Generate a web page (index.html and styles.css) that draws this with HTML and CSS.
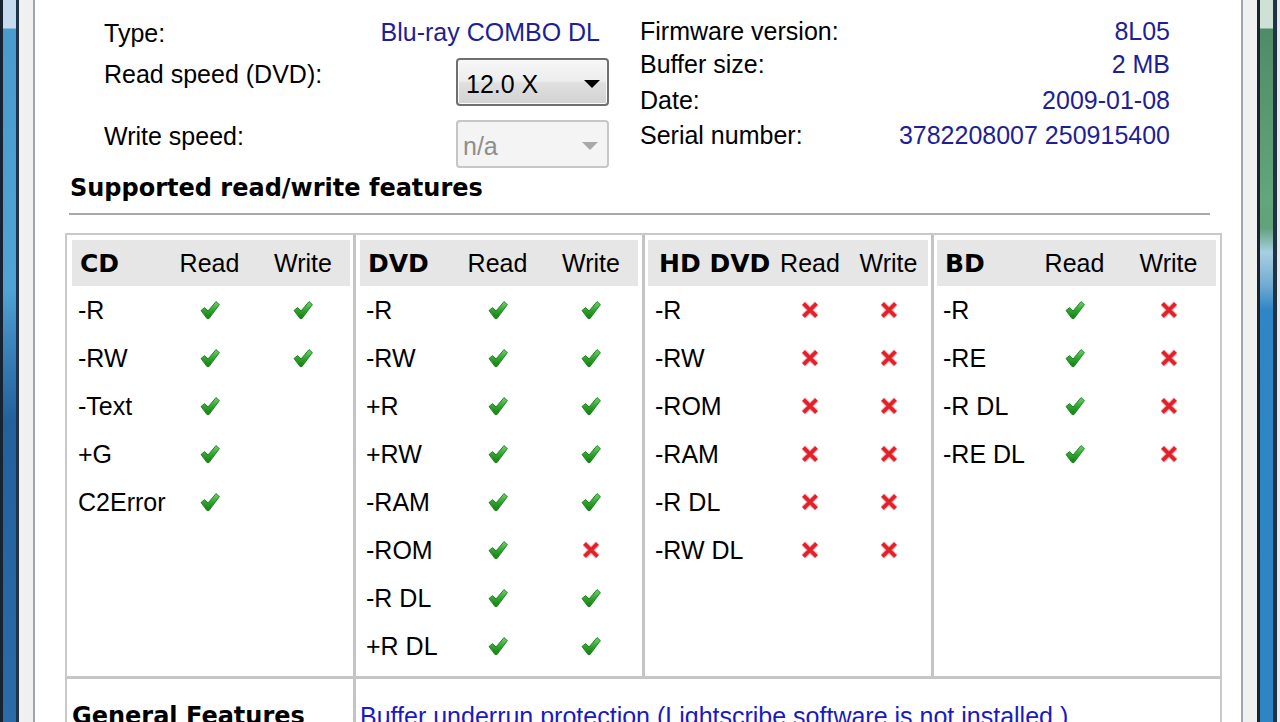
FILE: index.html
```html
<!DOCTYPE html>
<html lang="en">
<head>
<meta charset="utf-8">
<title>Drive information</title>
<link rel="stylesheet" href="styles.css">
</head>
<body>
<svg class="defs" aria-hidden="true">
  <defs>
    <linearGradient id="gchk" x1="0" y1="0" x2="0" y2="1">
      <stop offset="0" stop-color="#6fd66f"/>
      <stop offset="0.5" stop-color="#2fa52f"/>
      <stop offset="1" stop-color="#137f13"/>
    </linearGradient>
    <symbol id="ok" viewBox="0 0 20 20">
      <polygon points="1,10.5 4.6,7.6 8,11 16,1.6 19.4,4.6 9,18.6 7,18.6" fill="url(#gchk)" stroke="#1a7a1a" stroke-width="0.9" stroke-linejoin="round"/>
    </symbol>
    <symbol id="no" viewBox="0 0 20 20">
      <path d="M3.5 3.5 L16.5 16.5 M16.5 3.5 L3.5 16.5" stroke="#f5a3a6" stroke-width="5.4" fill="none"/>
      <path d="M3.5 3.5 L16.5 16.5 M16.5 3.5 L3.5 16.5" stroke="#e2202a" stroke-width="3.6" fill="none"/>
    </symbol>
  </defs>
</svg>
<div class="window">
  <div class="frame frame-l"></div>
  <div class="chrome chrome-l"></div>
  <main class="content">
    <section class="info">
      <div class="info-left">
        <div class="lbl">Type:</div>
        <div class="val type-val"><span>Blu-ray COMBO DL</span></div>
        <div class="lbl">Read speed (DVD):</div>
        <div class="combo"><span>12.0 X</span><i class="arrow"></i></div>
        <div class="lbl">Write speed:</div>
        <div class="combo disabled"><span>n/a</span><i class="arrow"></i></div>
      </div>
      <div class="info-right">
        <div class="lbl">Firmware version:</div><div class="val">8L05</div>
        <div class="lbl">Buffer size:</div><div class="val">2 MB</div>
        <div class="lbl">Date:</div><div class="val">2009-01-08</div>
        <div class="lbl">Serial number:</div><div class="val">3782208007 250915400</div>
      </div>
    </section>

    <h2 class="title">Supported read/write features</h2>
    <div class="rule"></div>

    <div class="features">
      <div class="cell c1">
        <div class="media">
          <div class="h name">CD</div><div class="h col">Read</div><div class="h col">Write</div>
          <div class="fmt">-R</div><div class="ic"><svg><use href="#ok"/></svg></div><div class="ic"><svg><use href="#ok"/></svg></div>
          <div class="fmt">-RW</div><div class="ic"><svg><use href="#ok"/></svg></div><div class="ic"><svg><use href="#ok"/></svg></div>
          <div class="fmt">-Text</div><div class="ic"><svg><use href="#ok"/></svg></div><div class="ic"></div>
          <div class="fmt">+G</div><div class="ic"><svg><use href="#ok"/></svg></div><div class="ic"></div>
          <div class="fmt">C2Error</div><div class="ic"><svg><use href="#ok"/></svg></div><div class="ic"></div>
        </div>
      </div>
      <div class="cell c2 sep">
        <div class="media">
          <div class="h name">DVD</div><div class="h col">Read</div><div class="h col">Write</div>
          <div class="fmt">-R</div><div class="ic"><svg><use href="#ok"/></svg></div><div class="ic"><svg><use href="#ok"/></svg></div>
          <div class="fmt">-RW</div><div class="ic"><svg><use href="#ok"/></svg></div><div class="ic"><svg><use href="#ok"/></svg></div>
          <div class="fmt">+R</div><div class="ic"><svg><use href="#ok"/></svg></div><div class="ic"><svg><use href="#ok"/></svg></div>
          <div class="fmt">+RW</div><div class="ic"><svg><use href="#ok"/></svg></div><div class="ic"><svg><use href="#ok"/></svg></div>
          <div class="fmt">-RAM</div><div class="ic"><svg><use href="#ok"/></svg></div><div class="ic"><svg><use href="#ok"/></svg></div>
          <div class="fmt">-ROM</div><div class="ic"><svg><use href="#ok"/></svg></div><div class="ic"><svg class="x"><use href="#no"/></svg></div>
          <div class="fmt">-R DL</div><div class="ic"><svg><use href="#ok"/></svg></div><div class="ic"><svg><use href="#ok"/></svg></div>
          <div class="fmt">+R DL</div><div class="ic"><svg><use href="#ok"/></svg></div><div class="ic"><svg><use href="#ok"/></svg></div>
        </div>
      </div>
      <div class="cell c3 sep">
        <div class="media hd">
          <div class="h name">HD DVD</div><div class="h col">Read</div><div class="h col">Write</div>
          <div class="fmt">-R</div><div class="ic"><svg class="x"><use href="#no"/></svg></div><div class="ic"><svg class="x"><use href="#no"/></svg></div>
          <div class="fmt">-RW</div><div class="ic"><svg class="x"><use href="#no"/></svg></div><div class="ic"><svg class="x"><use href="#no"/></svg></div>
          <div class="fmt">-ROM</div><div class="ic"><svg class="x"><use href="#no"/></svg></div><div class="ic"><svg class="x"><use href="#no"/></svg></div>
          <div class="fmt">-RAM</div><div class="ic"><svg class="x"><use href="#no"/></svg></div><div class="ic"><svg class="x"><use href="#no"/></svg></div>
          <div class="fmt">-R DL</div><div class="ic"><svg class="x"><use href="#no"/></svg></div><div class="ic"><svg class="x"><use href="#no"/></svg></div>
          <div class="fmt">-RW DL</div><div class="ic"><svg class="x"><use href="#no"/></svg></div><div class="ic"><svg class="x"><use href="#no"/></svg></div>
        </div>
      </div>
      <div class="cell c4 sep">
        <div class="media">
          <div class="h name">BD</div><div class="h col">Read</div><div class="h col">Write</div>
          <div class="fmt">-R</div><div class="ic"><svg><use href="#ok"/></svg></div><div class="ic"><svg class="x"><use href="#no"/></svg></div>
          <div class="fmt">-RE</div><div class="ic"><svg><use href="#ok"/></svg></div><div class="ic"><svg class="x"><use href="#no"/></svg></div>
          <div class="fmt">-R DL</div><div class="ic"><svg><use href="#ok"/></svg></div><div class="ic"><svg class="x"><use href="#no"/></svg></div>
          <div class="fmt">-RE DL</div><div class="ic"><svg><use href="#ok"/></svg></div><div class="ic"><svg class="x"><use href="#no"/></svg></div>
        </div>
      </div>
      <div class="cell general-label">General Features</div>
      <div class="cell general-val sep">Buffer underrun protection (Lightscribe software is not installed.)</div>
    </div>
  </main>
  <div class="chrome chrome-r"></div>
  <div class="frame frame-r"></div>
  <div class="edge"></div>
</div>
</body>
</html>
```

FILE: styles.css
```css
* { box-sizing: border-box; }

html, body {
  margin: 0;
  padding: 0;
}

body {
  width: 1280px;
  height: 722px;
  overflow: hidden;
  background: #ffffff;
  font-family: "Liberation Sans", Arial, sans-serif;
  font-size: 25px;
  color: #000000;
}

.defs {
  display: block;
  width: 0;
  height: 0;
  overflow: hidden;
}

.window {
  display: flex;
  height: 722px;
}

/* window frame */
.frame {
  flex: none;
  width: 19px;
  border-left: 3px solid #17232f;
  border-right: 3px solid #1f3447;
}

.frame-l {
  background: linear-gradient(to bottom,
    #c6dcee 0, #c6dcee 28px,
    #4a9bce 29px, #4fa4d5 290px,
    #3f88bf 335px, #23619d 420px, #2a6ba8 722px);
}

.frame-r {
  background: linear-gradient(to bottom,
    #cde1d4 0, #cde1d4 28px,
    #4f8b67 29px, #64a57c 200px, #62a17a 228px,
    #a8cfe1 252px, #72abd2 285px, #2f86c6 310px, #2e84c5 722px);
}

.edge {
  flex: none;
  width: 4px;
  background: #e9ecef;
  border-left: 1px solid #22303c;
}

.chrome {
  flex: none;
  width: 16px;
  background: #f0f0f0;
}

.chrome-l { border-right: 2px solid #9ea6b0; }
.chrome-r { border-left: 2px solid #9ea6b0; }

/* content */
.content {
  flex: 1;
  min-width: 0;
  padding: 16px 19px 0 30px;
  background: #ffffff;
}

.info {
  display: flex;
  padding-left: 39px;
  line-height: 30px;
}

.info-left {
  display: grid;
  grid-template-columns: 352px 153px;
  grid-template-rows: 41px 62px 48px;
  align-items: start;
  margin-top: 1px;
}

.info-left .lbl { padding-top: 1px; }

.info-right {
  display: grid;
  grid-template-columns: auto 1fr;
  grid-template-rows: 33px 36px 35px 30px;
  width: 530px;
  margin-left: 31px;
}

.val {
  color: #1e1e96;
  text-align: right;
  white-space: nowrap;
}

.type-val {
  display: flex;
  justify-content: flex-end;
  padding-right: 9px;
}

.type-val span { flex: none; }

/* combobox */
.combo {
  height: 48px;
  border: 2px solid #6f6f6f;
  border-radius: 4px;
  background: linear-gradient(to bottom, #f7f7f7 0%, #ededed 47%, #dfdfdf 53%, #d3d3d3 100%);
  box-shadow: inset 0 0 0 1px #fafafa;
  display: flex;
  align-items: center;
  justify-content: space-between;
  padding: 4px 7px 0 8px;
  line-height: 30px;
}

.combo .arrow {
  display: block;
  width: 0;
  height: 0;
  border-left: 8px solid transparent;
  border-right: 8px solid transparent;
  border-top: 8px solid #000000;
}

.combo.disabled {
  border-color: #c6c6c6;
  background: #f4f4f4;
  box-shadow: none;
  color: #8e8e8e;
  padding-left: 5px;
  padding-right: 9px;
}

.combo.disabled .arrow { border-top-color: #a9a9a9; }

/* section title */
.title {
  margin: 5px 0 0 5px;
  font-family: "DejaVu Sans", Verdana, sans-serif;
  font-weight: bold;
  font-size: 24px;
  line-height: 30px;
}

.rule {
  margin: 10px 0 0 4px;
  width: 1141px;
  height: 2px;
  background: #a9a9a9;
}

/* features table */
.features {
  margin-top: 18px;
  width: 1157px;
  display: grid;
  grid-template-columns: 286px 289px 289px 289px;
  border: 2px solid #c9c9c9;
  border-bottom: 0;
}

.cell { padding: 5px 4px 6px 4px; }
.c1 { padding-left: 5px; padding-right: 3px; }
.c3 { padding-left: 3px; padding-right: 3px; }
.c4 { padding-left: 3px; padding-right: 4px; }
.sep { border-left: 3px solid #c4c4c4; }

.media {
  display: grid;
  grid-template-columns: 91px 93px 1fr;
  grid-template-rows: 46px;
  grid-auto-rows: 48px;
  align-items: center;
}

.media.hd { grid-template-columns: 123px 78px 1fr; }

.h {
  align-self: stretch;
  display: flex;
  align-items: center;
  background: #e6e6e6;
}

.h.name {
  padding-left: 8px;
  font-family: "DejaVu Sans", Verdana, sans-serif;
  font-weight: bold;
  font-size: 25px;
}

.hd .h.name { padding-left: 11px; }

.h.col { justify-content: center; }

.fmt { padding-left: 6px; line-height: 30px; }
.hd .fmt { padding-left: 7px; }

.ic {
  display: flex;
  justify-content: center;
  align-items: center;
  height: 20px;
}

.ic svg {
  display: block;
  width: 20px;
  height: 20px;
}

.general-label,
.general-val {
  border-top: 3px solid #c6c6c6;
  padding-top: 22px;
  line-height: 30px;
}

.general-label {
  grid-column: 1;
  padding-left: 5px;
  font-family: "DejaVu Sans", Verdana, sans-serif;
  font-weight: bold;
  font-size: 24px;
}

.general-val {
  grid-column: 2 / 5;
  color: #1a1ac2;
}
```
